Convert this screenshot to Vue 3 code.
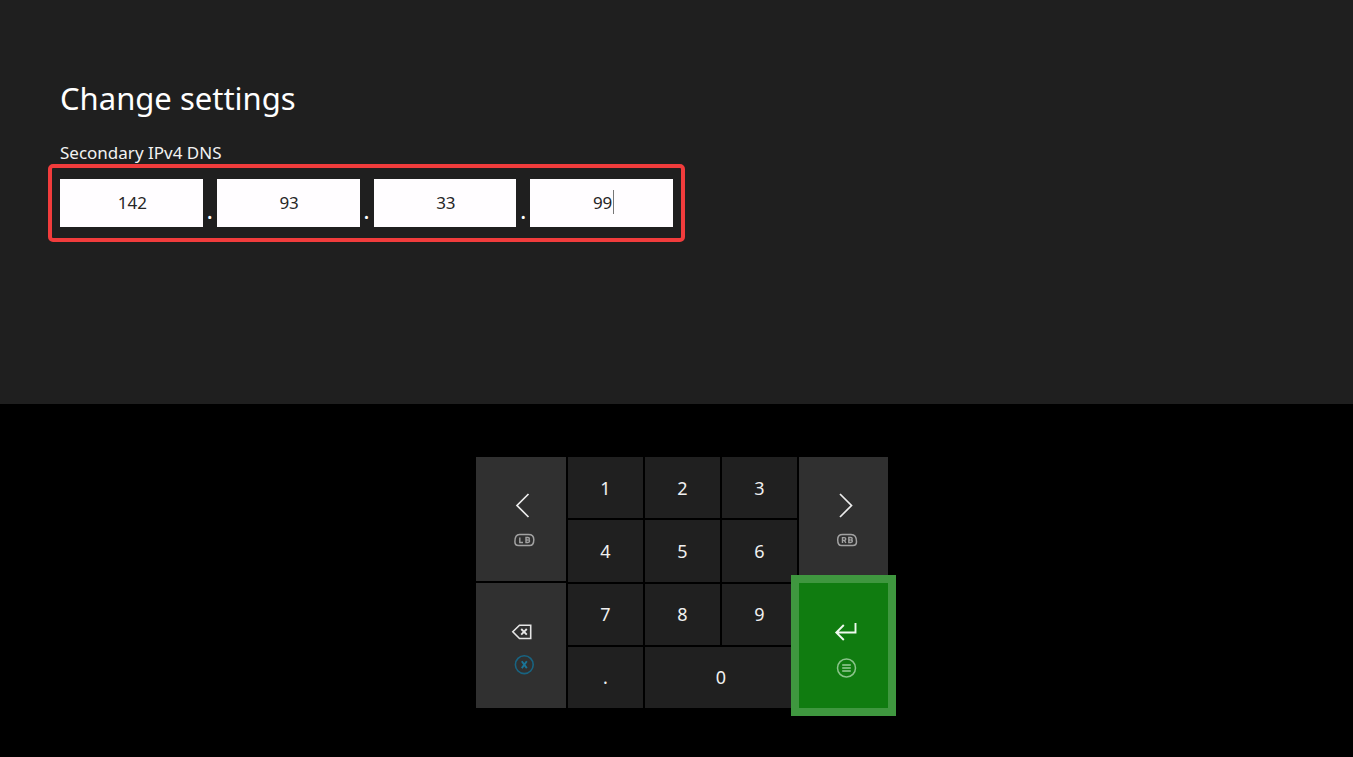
<script setup>
import { reactive } from 'vue'

const octets = reactive(['142', '93', '33', '99'])
const keys = ['1', '2', '3', '4', '5', '6', '7', '8', '9', '.', '0']
</script>

<template>
  <div class="screen">
    <main class="settings">
      <h1>Change settings</h1>
      <p id="dns-label" class="label">Secondary IPv4 DNS</p>
      <div class="address" role="group" aria-labelledby="dns-label">
        <template v-for="(octet, i) in octets" :key="i">
          <span v-if="i > 0" class="separator">.</span>
          <span class="field">
            <input
              v-model="octets[i]"
              type="text"
              inputmode="numeric"
              maxlength="3"
              :aria-label="`Octet ${i + 1}`"
            />
            <span v-if="i === 3" class="caret" aria-hidden="true"></span>
          </span>
        </template>
      </div>
    </main>

    <section class="keyboard" aria-label="Number pad">
      <div class="pad">
        <button type="button" class="key side previous" aria-label="Move left">
          <svg width="48" height="124" viewBox="0 0 48 124" fill="none">
            <path d="M31.500 37 20 48.500 31.500 60" stroke="#ececec" stroke-width="1.700" />
            <path d="M22.500 77.500h9q5.300 0 5.300 5.200 0 5.800-4.300 5.800H21.500q-3.600 0-3.600-3.800 0-7.200 4.600-7.200Z" stroke="#a2a2a2" stroke-width="1.500" />
            <path d="M22.800 80.500v5h3.200M29 80.500v5h1.900q1.700 0 1.700-1.400 0-1.100-1.400-1.100 1.200 0 1.200-1.300 0-1.200-1.500-1.200ZM29 83h1.900" stroke="#a2a2a2" stroke-width="1.400" />
          </svg>
        </button>
        <button type="button" class="key side next" aria-label="Move right">
          <svg width="48" height="124" viewBox="0 0 48 124" fill="none">
            <path d="M20 37 31.500 48.500 20 60" stroke="#ececec" stroke-width="1.700" />
            <path d="M22.500 77.500h8.500q5.500 0 5.500 7.200 0 3.800-3.600 3.800H21.500q-3.800 0-3.800-5.800 0-5.200 4.800-5.200Z" stroke="#a2a2a2" stroke-width="1.500" />
            <path d="M22.500 86v-5.400h1.700q1.600 0 1.600 1.400t-1.600 1.400H22.500M24.300 83.400l1.600 2.600M28.800 80.500v5h1.900q1.700 0 1.700-1.400 0-1.100-1.400-1.100 1.200 0 1.200-1.300 0-1.200-1.500-1.200ZM28.800 83h1.900" stroke="#a2a2a2" stroke-width="1.400" />
          </svg>
        </button>
        <button type="button" class="key side backspace" aria-label="Backspace">
          <svg width="48" height="124" viewBox="0 0 48 124" fill="none">
            <path d="M22.500 41.200h11.200v13.300H22.500L15.800 47.800Z" stroke="#e6e6e6" stroke-width="1.600" />
            <path d="m24.200 45 5.600 5.600m0-5.600-5.600 5.600" stroke="#e6e6e6" stroke-width="1.900" />
            <circle cx="27.300" cy="80.700" r="8.900" stroke="#186482" stroke-width="1.600" />
            <path d="m24.800 77.300 5 6.800m0-6.800-5 6.800" stroke="#1a7497" stroke-width="1.900" />
          </svg>
        </button>
        <button type="button" class="key side enter" aria-label="Enter">
          <svg width="48" height="125" viewBox="0 0 48 125" fill="none">
            <path d="M35.500 40v9.500H16M23.800 42l-7.500 7.500 7.500 7.500" stroke="#effaef" stroke-width="1.900" />
            <circle cx="26.500" cy="85" r="9" stroke="#8bc48b" stroke-width="1.500" />
            <path d="M22.200 82h8.600M22.200 85h8.600M22.200 88h8.600" stroke="#98cb98" stroke-width="1.500" />
          </svg>
        </button>
        <div class="numbers">
          <button
            v-for="key in keys"
            :key="key"
            type="button"
            class="key"
            :class="{ zero: key === '0' }"
          >{{ key }}</button>
        </div>
      </div>
    </section>
  </div>
</template>

<style>
body {
  margin: 0;
  background: #000;
}
</style>

<style scoped>
* {
  box-sizing: border-box;
}

.screen {
  display: grid;
  grid-template-rows: 404fr 353fr;
  min-height: 100vh;
  color: #fff;
  font-family: "Segoe UI", "Noto Sans", "Open Sans", sans-serif;
}

.settings {
  padding: 74px 48px 0;
  background: #1f1f1f;
}

h1 {
  margin: 0 12px;
  font-size: 31px;
  font-weight: 400;
  line-height: 48px;
}

.label {
  margin: 20px 12px 0;
  font-size: 17px;
  line-height: 22px;
  color: #f2f2f2;
}

.address {
  display: flex;
  max-width: 637px;
  padding: 11px 8px;
  border: 4px solid #f13c3c;
  border-radius: 5px;
}

.field {
  position: relative;
  flex: 1;
  min-width: 0;
}

input {
  display: block;
  width: 100%;
  height: 48px;
  padding: 0 0 2px 2px;
  border: 0;
  border-radius: 0;
  outline: 0;
  background: #fffdff;
  color: #262626;
  font: inherit;
  font-size: 17px;
  text-align: center;
}

.caret {
  position: absolute;
  top: 11px;
  left: calc(50% + 11px);
  width: 1px;
  height: 24px;
  background: #777;
}

.separator {
  align-self: flex-end;
  width: 14px;
  font-size: 24px;
  line-height: 34px;
  text-align: center;
}

.keyboard {
  display: flex;
  justify-content: center;
  align-items: flex-start;
  padding: 53px 0 40px 11px;
  background: #000;
}

.pad {
  display: grid;
  grid-template: "previous numbers next" 1fr "backspace numbers enter" 1fr / 90px 229px 89px;
  gap: 2px;
  height: 251px;
}

.numbers {
  grid-area: numbers;
  display: grid;
  grid-template-columns: repeat(3, 1fr);
  grid-auto-rows: 1fr;
  gap: 2px;
}

.key {
  display: flex;
  justify-content: center;
  align-items: center;
  padding: 0;
  border: 0;
  background: #202020;
  color: #f0f0f0;
  font: inherit;
  font-size: 18px;
}

.side {
  background: #303030;
}

.previous {
  grid-area: previous;
}

.next {
  grid-area: next;
}

.backspace {
  grid-area: backspace;
}

.enter {
  grid-area: enter;
  z-index: 1;
  background: #107c10;
  box-shadow: 0 0 0 8px #3f973f;
}

.zero {
  grid-column: span 2;
}
</style>
